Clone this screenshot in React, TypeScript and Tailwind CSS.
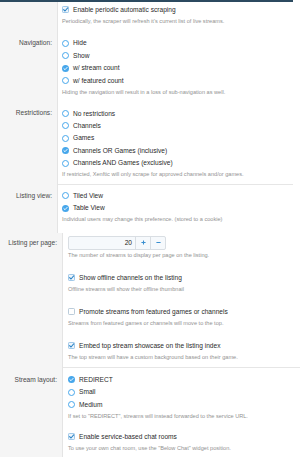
import React from 'react';

// XenForo-style option list, scaled down

function Radio({ checked }: { checked?: boolean }) {
  if (checked) {
    return (
      <span className="w-[7px] h-[7px] rounded-full bg-[#47a7eb] flex items-center justify-center shrink-0">
        <svg viewBox="0 0 8 8" className="w-[5px] h-[5px]">
          <path d="M1.4 4.2 L3.2 5.9 L6.6 2.2" fill="none" stroke="#fff" strokeWidth={1.5} strokeLinecap="round" strokeLinejoin="round" />
        </svg>
      </span>
    );
  }
  return <span className="w-[7px] h-[7px] rounded-full border-[1.2px] border-[#47a7eb] bg-white shrink-0" />;
}

function Checkbox({ checked }: { checked?: boolean }) {
  return (
    <svg viewBox="0 0 7 7" className="w-[7px] h-[7px] shrink-0">
      <rect x="0.5" y="0.5" width="6" height="6" rx="0.8" fill={checked ? '#eef5fb' : '#fff'} stroke={checked ? '#8cbde3' : '#a9bfd0'} strokeWidth={0.8} />
      {checked && (
        <path d="M1.6 3.6 L3 5 L5.7 1.9" fill="none" stroke="#2f86c8" strokeWidth={1.1} strokeLinecap="round" strokeLinejoin="round" />
      )}
    </svg>
  );
}

function Option({ children, type = 'radio', checked }: { children: React.ReactNode; type?: 'radio' | 'check'; checked?: boolean }) {
  return (
    <div className="flex items-center gap-[4px] h-[12.4px] text-[6.6px] text-[#2a2a2a] whitespace-nowrap">
      {type === 'radio' ? <Radio checked={checked} /> : <Checkbox checked={checked} />}
      <span>{children}</span>
    </div>
  );
}

function Hint({ children }: { children: React.ReactNode }) {
  return <div className="text-[5.6px] leading-[11px] text-[#929292] whitespace-nowrap">{children}</div>;
}

interface RowProps {
  label?: string;
  labelWidth: string;
  pad: string;
  sep?: boolean;
  children: React.ReactNode;
}

function Row({ label, labelWidth, pad, sep, children }: RowProps) {
  return (
    <div className="flex">
      <div className={`${labelWidth} shrink-0 bg-[#f5f5f5] border-r border-[#e4e4e4] text-right pr-[5px] text-[6.6px] leading-[12.4px] text-[#4a4a4a] whitespace-nowrap ${pad}`}>
        {label}
      </div>
      <div className={`flex-1 ${sep ? 'border-b border-[#e6e6e6]' : ''}`}>{children}</div>
    </div>
  );
}

export default function App() {
  return (
    <div className="w-[300px] h-[457px] overflow-hidden bg-white font-['Liberation_Sans',Arial,sans-serif]">
      {/* first block */}
      <div className="w-[293px] border-t-2 border-[#2c4a60]">
        <Row labelWidth="w-[58px]" pad="pt-[1.8px]">
          <div className="pl-[4px] pt-[1.8px]">
            <Option type="check" checked>Enable periodic automatic scraping</Option>
            <Hint>Periodically, the scraper will refresh it's current list of live streams.</Hint>
          </div>
        </Row>
        <Row label="Navigation:" labelWidth="w-[58px]" pad="pt-[10px]">
          <div className="pl-[4px] pt-[10px]">
            <Option>Hide</Option>
            <Option>Show</Option>
            <Option checked>w/ stream count</Option>
            <Option>w/ featured count</Option>
            <Hint>Hiding the navigation will result in a loss of sub-navigation as well.</Hint>
          </div>
        </Row>
        <Row label="Restrictions:" labelWidth="w-[58px]" pad="pt-[9.5px]" sep>
          <div className="pl-[4px] pt-[9.5px] pb-[3.7px]">
            <Option>No restrictions</Option>
            <Option>Channels</Option>
            <Option>Games</Option>
            <Option checked>Channels OR Games (inclusive)</Option>
            <Option>Channels AND Games (exclusive)</Option>
            <Hint>If restricted, Xenftic will only scrape for approved channels and/or games.</Hint>
          </div>
        </Row>
        <Row label="Listing view:" labelWidth="w-[58px]" pad="pt-[4.8px]">
          <div className="pl-[4px] pt-[4.8px] pb-[7.4px]">
            <Option>Tiled View</Option>
            <Option checked>Table View</Option>
            <Hint>Individual users may change this preference. (stored to a cookie)</Hint>
          </div>
        </Row>
      </div>

      {/* second block */}
      <div className="w-[300px]">
        <div className="flex">
          <div className="w-[63px] shrink-0 bg-[#f5f5f5] border-r border-[#e4e4e4] text-right pr-[5px] pt-[3px] text-[6.6px] leading-[14px] text-[#4a4a4a] whitespace-nowrap">
            Listing per page:
          </div>
          <div className="flex-1 pl-[5px] pt-[3px]">
            <div className="flex w-[98px] h-[14px] border border-[#d9dee3] rounded-[2px] bg-[#f6f9fc] overflow-hidden">
              <div className="flex-1 text-right pr-[3px] text-[6.6px] leading-[12px] text-[#222]">20</div>
              <div className="w-[15px] border-l border-[#d9dee3] flex items-center justify-center">
                <svg viewBox="0 0 6 6" className="w-[5px] h-[5px]">
                  <path d="M3 0.5 V5.5 M0.5 3 H5.5" stroke="#3a8fd0" strokeWidth={1.3} />
                </svg>
              </div>
              <div className="w-[15px] border-l border-[#d9dee3] flex items-center justify-center">
                <svg viewBox="0 0 6 6" className="w-[5px] h-[5px]">
                  <path d="M0.5 3 H5.5" stroke="#3a8fd0" strokeWidth={1.3} />
                </svg>
              </div>
            </div>
            <div className="mt-[0.5px]">
              <Hint>The number of streams to display per page on the listing.</Hint>
            </div>
          </div>
        </div>

        <Row labelWidth="w-[63px]" pad="pt-[10.3px]">
          <div className="pl-[5px] pt-[10.3px]">
            <Option type="check" checked>Show offline channels on the listing</Option>
            <Hint>Offline streams will show their offline thumbnail</Hint>
          </div>
        </Row>
        <Row labelWidth="w-[63px]" pad="pt-[10.6px]">
          <div className="pl-[5px] pt-[10.6px]">
            <Option type="check">Promote streams from featured games or channels</Option>
            <Hint>Streams from featured games or channels will move to the top.</Hint>
          </div>
        </Row>
        <Row labelWidth="w-[63px]" pad="pt-[10.6px]" sep>
          <div className="pl-[5px] pt-[10.6px] pb-[3.8px]">
            <Option type="check" checked>Embed top stream showcase on the listing index</Option>
            <Hint>The top stream will have a custom background based on their game.</Hint>
          </div>
        </Row>
        <Row label="Stream layout:" labelWidth="w-[63px]" pad="pt-[5.8px]">
          <div className="pl-[5px] pt-[5.8px]">
            <Option checked>REDIRECT</Option>
            <Option>Small</Option>
            <Option>Medium</Option>
            <Hint>If set to "REDIRECT", streams will instead forwarded to the service URL.</Hint>
          </div>
        </Row>
        <Row labelWidth="w-[63px]" pad="pt-[8.8px]">
          <div className="pl-[5px] pt-[8.8px] pb-[10px]">
            <Option type="check" checked>Enable service-based chat rooms</Option>
            <Hint>To use your own chat room, use the "Below Chat" widget position.</Hint>
          </div>
        </Row>
      </div>
    </div>
  );
}
